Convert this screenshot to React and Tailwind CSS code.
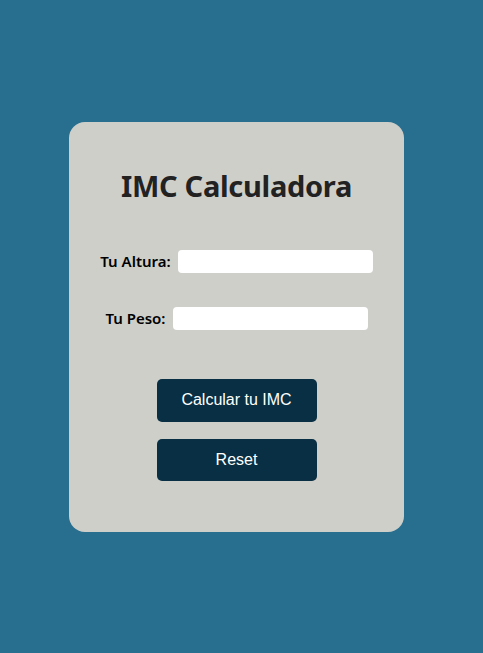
import React, { useState } from "react";

export default function App() {
  const [altura, setAltura] = useState("");
  const [peso, setPeso] = useState("");

  const reset = () => {
    setAltura("");
    setPeso("");
  };

  return (
    <div className="min-h-screen flex items-center justify-center bg-[#286e8f]">
      <div className="w-[335px] h-[410px] mr-[10px] rounded-[16px] bg-[#cfcfca] flex flex-col items-center pt-[46px]" style={{ fontFamily: '"Noto Sans", sans-serif' }}>
        <h1 className="text-[29px] leading-[36px] font-bold text-[#222] tracking-[-0.3px]">IMC Calculadora</h1>

        <div className="mt-[46px] flex items-center gap-[7px]">
          <label className="text-[15px] font-semibold text-black">Tu Altura:</label>
          <input value={altura} onChange={e => setAltura(e.target.value)} className="w-[195px] h-[23px] rounded-[4px] bg-white outline-none px-1 text-sm" />
        </div>

        <div className="mt-[34px] flex items-center gap-[7px]">
          <label className="text-[15px] font-semibold text-black">Tu Peso:</label>
          <input value={peso} onChange={e => setPeso(e.target.value)} className="w-[195px] h-[23px] rounded-[4px] bg-white outline-none px-1 text-sm" />
        </div>

        <button className="mt-[49px] w-[160px] h-[43px] rounded-[5px] bg-[#082f43] text-white text-[16px]" style={{ fontFamily: '"Liberation Sans", Arial, sans-serif' }}>
          Calcular tu IMC
        </button>
        <button onClick={reset} className="mt-[17px] w-[160px] h-[42px] rounded-[5px] bg-[#082f43] text-white text-[16px]" style={{ fontFamily: '"Liberation Sans", Arial, sans-serif' }}>
          Reset
        </button>
      </div>
    </div>
  );
}
